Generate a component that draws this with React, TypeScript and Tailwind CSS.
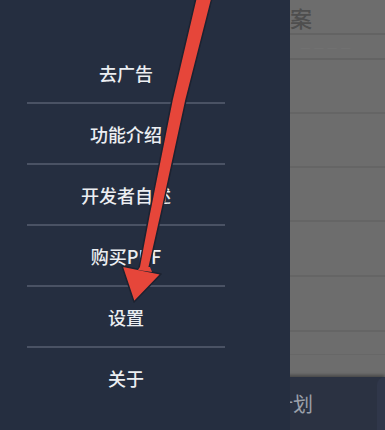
import React from 'react';

const menuItems = ['去广告', '功能介绍', '开发者自述', '购买PDF', '设置', '关于'];

const font = { fontFamily: '"Noto Sans CJK SC", "Noto Sans", sans-serif' };

const BackgroundRows: React.FC = () => (
  <div className="flex h-full w-full flex-col bg-[#6d6d6d]">
    <div className="flex h-[35px] items-center border-b-2 border-[#636363] pl-[268px]">
      <span className="text-[22px] font-medium leading-none text-[#4e4e4e]">答案</span>
    </div>
    <div className="flex h-[25px] items-center border-b-2 border-[#636363] pl-[300px]">
      <span className="text-[12px] leading-none text-[#727272]">— — — —</span>
    </div>
    <div className="h-[54px] border-b-2 border-[#656565]" />
    <div className="h-[54px] border-b-2 border-[#656565]" />
    <div className="h-[54px] border-b-2 border-[#656565]" />
    <div className="h-[55px] border-b-2 border-[#656565]" />
    <div className="h-[55px] border-b-2 border-[#656565]" />
    <div className="h-[23px] border-b border-[#676767]" />
    <div className="h-[22px]" />
    <div className="relative flex flex-1 items-center bg-[#2b3242] pl-[273px] shadow-[0_-2px_3px_rgba(0,0,0,0.35)]">
      <span className="text-[20px] leading-none text-[#9ba0aa]">计划</span>
      <div className="absolute right-0 top-0 h-full w-[8px] rounded-tl-[10px] bg-[#30374a]" />
    </div>
  </div>
);

const Arrow: React.FC = () => (
  <svg className="pointer-events-none absolute inset-0" width="385" height="430" viewBox="0 0 385 430">
    <polygon
      points="196,-2 172,100 149,215 139,268 149,268 161,215 186,100 212,-2"
      fill="#e6463a"
      stroke="#1c2230"
      strokeWidth="1.5"
      strokeLinejoin="round"
    />
    <polygon
      points="122,266 161,274 134,302"
      fill="#e6463a"
      stroke="#1c2230"
      strokeWidth="1.5"
      strokeLinejoin="round"
    />
    <polygon points="140,267 150,267 152,272 138,270" fill="#e6463a" />
  </svg>
);

export default function App() {
  return (
    <div className="relative h-[430px] w-[385px] overflow-hidden" style={font}>
      <BackgroundRows />
      <div className="absolute left-0 top-0 h-full w-[290px] bg-[#252e40]">
        <div className="flex w-[252px] flex-col pt-[43px]">
          {menuItems.map((item, i) => (
            <React.Fragment key={item}>
              <div className="flex h-[59px] items-center justify-center text-[18px] font-medium leading-none text-[#eceef2]">
                {item}
              </div>
              {i < menuItems.length - 1 && <div className="mx-[27px] h-[2px] bg-[#4a5264]" />}
            </React.Fragment>
          ))}
        </div>
      </div>
      <Arrow />
    </div>
  );
}
